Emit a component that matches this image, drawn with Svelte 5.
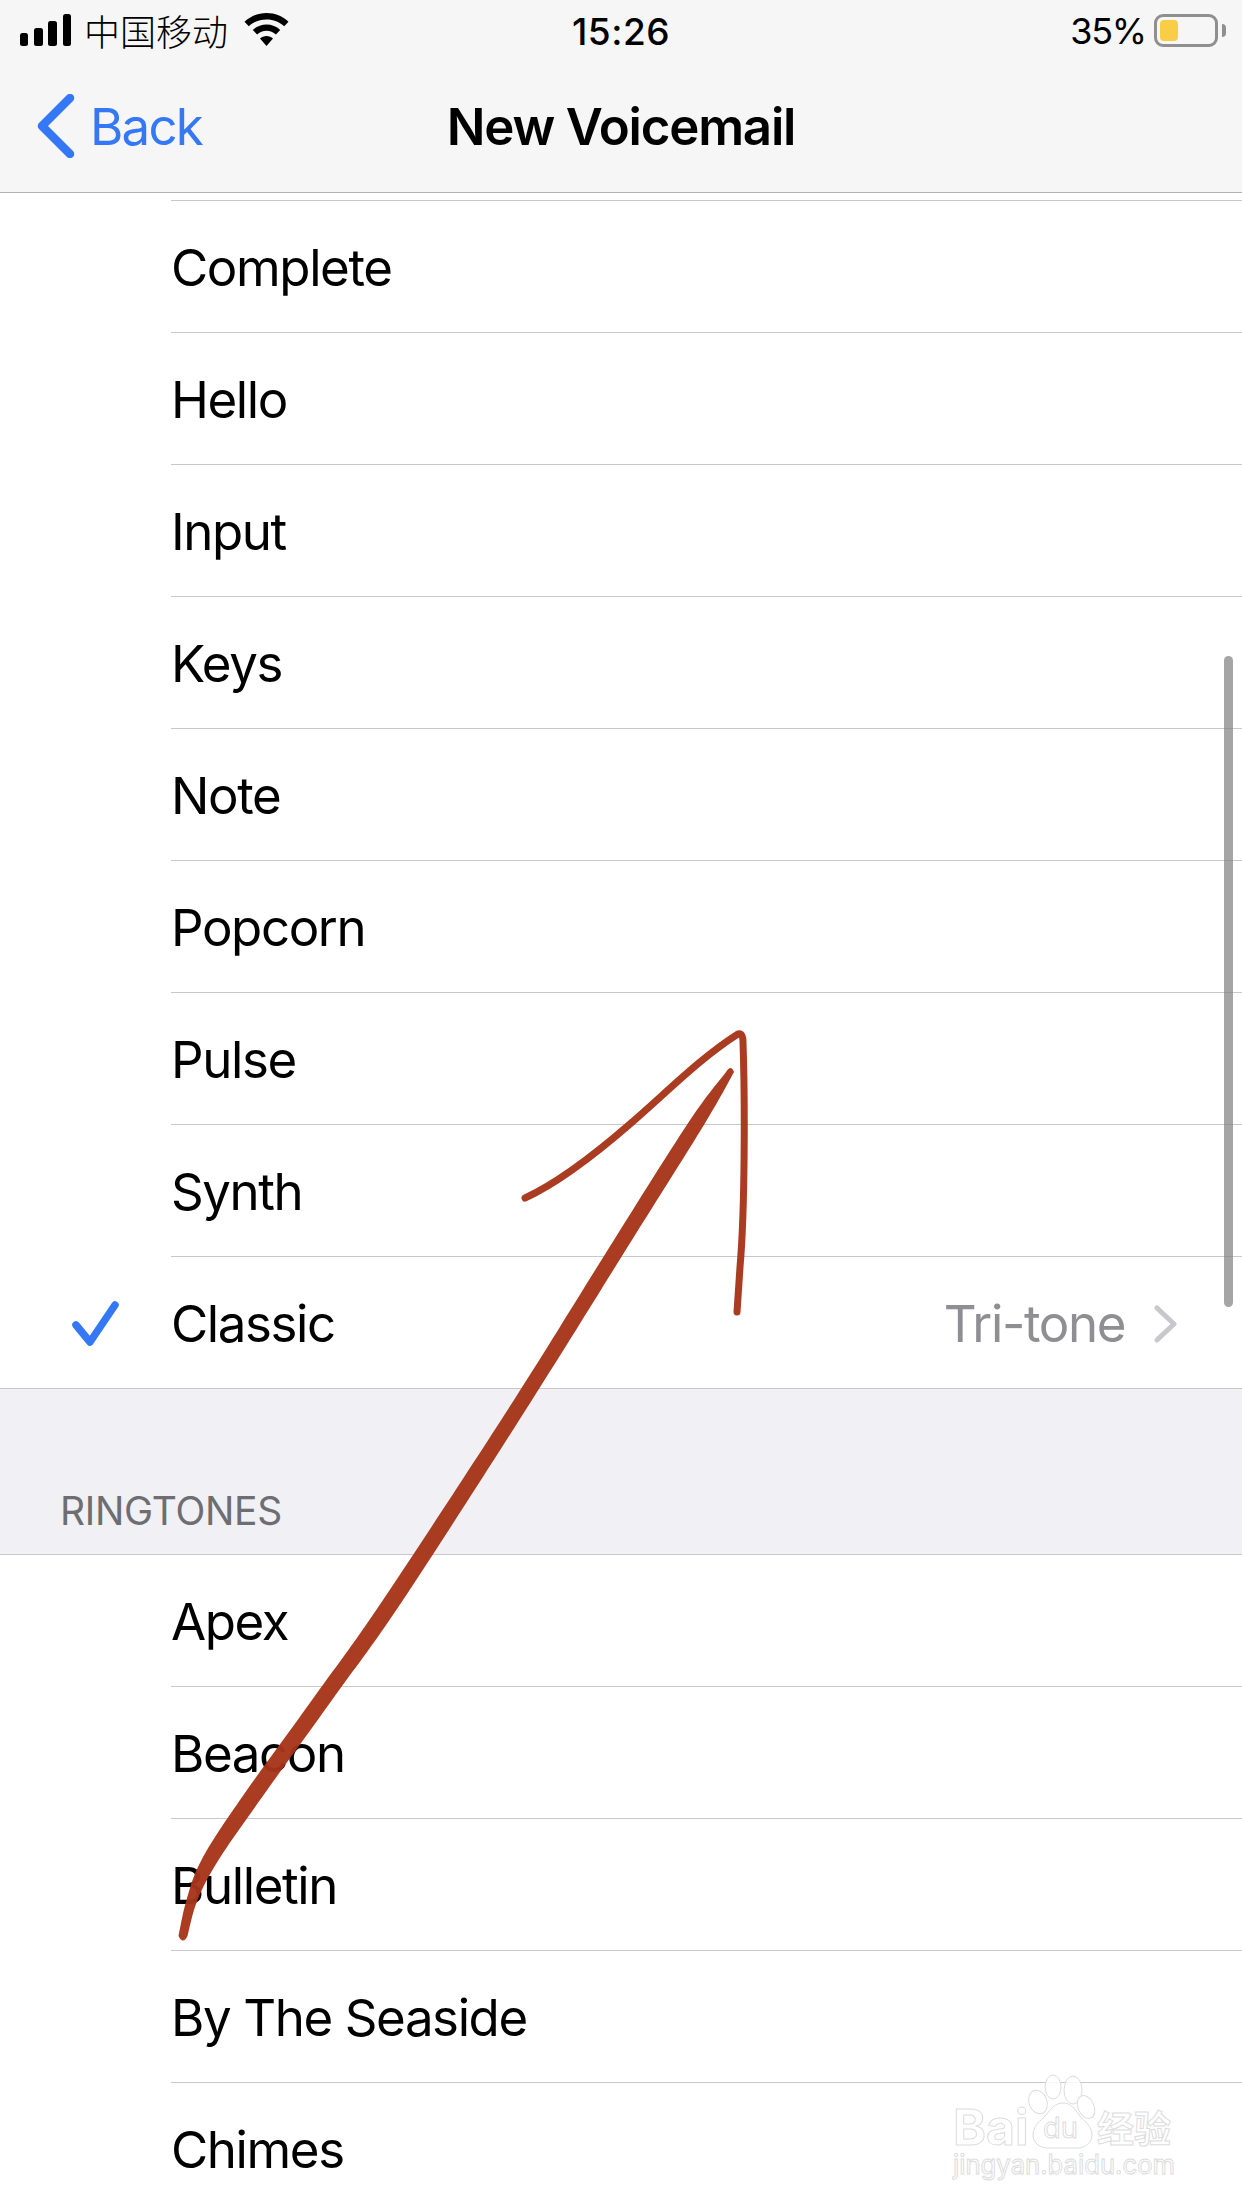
<script>
	const alerts = ['Complete', 'Hello', 'Input', 'Keys', 'Note', 'Popcorn', 'Pulse', 'Synth'];
	const ringtones = ['Apex', 'Beacon', 'Bulletin', 'By The Seaside', 'Chimes'];

	// centre line of the thick pen stroke: x, y, half width
	const pen = [[730, 1072, 4], [696, 1124, 8.5], [613, 1256, 9], [523, 1400, 9], [393, 1600, 10], [322, 1700, 10], [250, 1800, 10], [210, 1860, 8.5], [192, 1900, 5.5], [183, 1936, 4.5]];

	// catmull-rom through the points, so the outline has no kinks
	function smooth(pts) {
		let d = `L${pts[0][0]} ${pts[0][1]}`;
		for (let i = 0; i < pts.length - 1; i++) {
			const a = pts[i - 1] || pts[i];
			const b = pts[i];
			const c = pts[i + 1];
			const e = pts[i + 2] || c;
			const c1 = [b[0] + (c[0] - a[0]) / 6, b[1] + (c[1] - a[1]) / 6];
			const c2 = [c[0] - (e[0] - b[0]) / 6, c[1] - (e[1] - b[1]) / 6];
			d += `C${c1[0]} ${c1[1]} ${c2[0]} ${c2[1]} ${c[0]} ${c[1]}`;
		}
		return d;
	}
	const leftEdge = pen.map(([x, y, w]) => [x - w, y]).reverse();
	const rightEdge = pen.map(([x, y, w]) => [x + w, y]);
	const thick =
		smooth(leftEdge).replace('L', 'M') +
		'Q731 1064 734 1072' +
		smooth(rightEdge) +
		'Q183 1945 178.500 1936Z';
</script>

<div class="page">
	<header class="bar">
		<div class="status">
			<div class="status-left">
				<svg class="signal" width="51" height="32" viewBox="0 0 51 32">
					<rect x="0" y="19" width="8" height="13" rx="2.5" />
					<rect x="14" y="14" width="9" height="18" rx="2.5" />
					<rect x="28" y="7" width="9" height="25" rx="2.5" />
					<rect x="43" y="0" width="8" height="32" rx="2.5" />
				</svg>
				<span class="carrier">中国移动</span>
				<svg class="wifi" width="45" height="33" viewBox="0 0 45 33">
					<path d="M22.5 0C14 0 6.300 3.300.5 8.700l4.300 4.600C9.400 9 15.600 6.400 22.500 6.400S35.600 9 40.200 13.300l4.300-4.600C38.700 3.300 31 0 22.500 0z" />
					<path d="M22.500 11.500c-5.300 0-10.100 2-13.700 5.400l4.300 4.600c2.500-2.300 5.800-3.700 9.400-3.700s6.900 1.400 9.400 3.700l4.300-4.600c-3.600-3.400-8.400-5.400-13.700-5.400z" />
					<path d="M22.500 23c-2.500 0-4.800 1-6.500 2.500L22.500 33l6.500-7.500c-1.700-1.500-4-2.500-6.500-2.500z" />
				</svg>
			</div>
			<span class="time">15:26</span>
			<div class="status-right">
				<span class="percent">35%</span>
				<div class="battery"><div class="charge"></div></div>
				<div class="nub"></div>
			</div>
		</div>
		<nav class="nav">
			<div class="back">
				<svg width="38" height="64" viewBox="0 0 38 64">
					<path d="M33 4 5 32l28 28" fill="none" stroke="#3478f6" stroke-width="8.500" stroke-linecap="round" stroke-linejoin="round" />
				</svg>
				<span>Back</span>
			</div>
			<h1>New Voicemail</h1>
		</nav>
	</header>

	<main class="list">
		<div class="top-rule"></div>
		{#each alerts as name}
			<div class="row">
				<div class="cell">{name}</div>
			</div>
		{/each}
		<div class="row last">
			<div class="mark">
				<svg width="50" height="48" viewBox="0 0 50 48">
					<path d="M5 25 19 42 44 5" fill="none" stroke="#3478f6" stroke-width="7.500" stroke-linecap="round" stroke-linejoin="round" />
				</svg>
			</div>
			<div class="cell">
				<span>Classic</span>
				<span class="detail">Tri-tone</span>
				<svg class="chevron" width="24" height="38" viewBox="0 0 24 38">
					<path d="M3 3 20 19 3 35" fill="none" stroke="#c7c7cc" stroke-width="5" stroke-linecap="round" stroke-linejoin="round" />
				</svg>
			</div>
		</div>
		<div class="section"><span>RINGTONES</span></div>
		{#each ringtones as name}
			<div class="row">
				<div class="cell">{name}</div>
			</div>
		{/each}
	</main>

	<div class="scrollbar"></div>

	<!-- hand drawn arrow on top of the screenshot -->
	<svg class="ink" width="1242" height="2208" viewBox="0 0 1242 2208">
		<path d={thick} fill="#a63519" />
		<path
			d="M525 1198C560 1182 600 1150 630 1124C665 1094 700 1058 738 1034C742 1033 743 1037 743 1042C745 1100 745 1210 740 1267L737 1312"
			fill="none"
			stroke="#a63519"
			stroke-width="7"
			stroke-linecap="round"
			stroke-linejoin="round"
		/>
	</svg>

	<!-- watermark -->
	<svg class="mark-logo" width="302" height="128" viewBox="940 2070 302 128">
		<g fill="#fff" fill-opacity="0.85" stroke="#dcdcdc" stroke-width="1">
			<ellipse cx="1053" cy="2087" rx="8" ry="12" />
			<ellipse cx="1073" cy="2090" rx="9" ry="14" />
			<ellipse cx="1038" cy="2102" rx="9" ry="12" transform="rotate(-20 1038 2102)" />
			<ellipse cx="1086" cy="2107" rx="8" ry="12" transform="rotate(-25 1086 2107)" />
			<path d="M1063 2103c-8 0-12 6-17 12-6 6-13 11-13 20 0 9 8 13 16 13h28c8 0 15-5 15-13 0-9-7-13-13-20-4-6-8-12-16-12z" />
			<text x="953" y="2145" font-size="50" font-weight="700" class="wm">Bai</text>
			<text x="1043" y="2138" font-size="29" class="wm">du</text>
			<text x="1097" y="2143" font-size="37" font-weight="700" class="wm cjk">经验</text>
			<text x="953" y="2174" font-size="27" textLength="222" lengthAdjust="spacingAndGlyphs" class="wm">jingyan.baidu.com</text>
		</g>
	</svg>
</div>

<style>
	:global(body) {
		margin: 0;
		background: #fff;
	}
	.page {
		position: relative;
		width: 1242px;
		height: 2208px;
		overflow: hidden;
		background: #fff;
		color: #000;
		font-family: Inter, "Noto Sans CJK SC", sans-serif;
	}
	.bar {
		height: 193px;
		box-sizing: border-box;
		background: #f6f6f6;
		border-bottom: 1px solid #b2b2b2;
	}
	.status {
		position: relative;
		display: flex;
		justify-content: space-between;
		align-items: center;
		height: 60px;
		padding: 0 16px 0 20px;
	}
	.status-left {
		display: flex;
		align-items: center;
	}
	.signal {
		fill: #000;
	}
	.carrier {
		margin-left: 13px;
		font-size: 36px;
		font-family: "Noto Sans CJK SC", sans-serif;
		font-weight: 300;
	}
	.wifi {
		margin-left: 16px;
		margin-bottom: 2px;
	}
	.time {
		position: absolute;
		left: 572px;
		top: 9px;
		font-size: 37px;
		font-weight: 500;
		letter-spacing: 0.500px;
	}
	.status-right {
		display: flex;
		align-items: center;
	}
	.percent {
		padding-top: 2px;
		font-size: 36px;
		font-weight: 400;
		letter-spacing: -1.200px;
		margin-right: 8px;
	}
	.battery {
		box-sizing: border-box;
		width: 64px;
		height: 33px;
		padding: 3px;
		border: 3px solid #8f8f8f;
		border-radius: 9px;
	}
	.charge {
		width: 18px;
		height: 100%;
		background: #f9ce46;
		border-radius: 4px;
	}
	.nub {
		width: 4px;
		height: 13px;
		margin-left: 4px;
		background: #8f8f8f;
		border-radius: 0 4px 4px 0;
	}
	.nav {
		position: relative;
		display: flex;
		align-items: center;
		justify-content: center;
		height: 132px;
	}
	.back {
		position: absolute;
		left: 37px;
		display: flex;
		align-items: center;
		gap: 15px;
		color: #3478f6;
		font-size: 51px;
		letter-spacing: -1.800px;
	}
	h1 {
		margin: 0;
		font-size: 51px;
		font-weight: 600;
		letter-spacing: -1.200px;
	}
	.list {
		padding-top: 7px;
	}
	.top-rule {
		height: 1px;
		margin-left: 171px;
		background: #c8c7cc;
	}
	.row {
		position: relative;
		height: 132px;
		padding-left: 171px;
		box-sizing: border-box;
		font-size: 51px;
		letter-spacing: -1.400px;
	}
	.cell {
		display: flex;
		align-items: center;
		height: 100%;
		box-sizing: border-box;
		padding-top: 2px;
		border-bottom: 1px solid #c8c7cc;
	}
	.last {
		height: 131px;
	}
	.last .cell {
		border-bottom: 0;
	}
	.mark {
		position: absolute;
		left: 71px;
		top: 42px;
	}
	.detail {
		margin-left: auto;
		color: #8e8e93;
	}
	.chevron {
		margin-left: 29px;
		margin-right: 64px;
	}
	.section {
		display: flex;
		align-items: flex-end;
		height: 167px;
		box-sizing: border-box;
		padding: 0 0 20px 60px;
		background: #f0f0f5;
		border-top: 1px solid #c8c7cc;
		border-bottom: 1px solid #c8c7cc;
		color: #6d6d72;
		font-size: 39px;
		letter-spacing: -0.300px;
		line-height: 46px;
	}
	.scrollbar {
		position: absolute;
		top: 656px;
		left: 1224px;
		width: 9px;
		height: 651px;
		background: rgba(130, 130, 130, 0.72);
		border-radius: 5px;
	}
	.ink {
		position: absolute;
		top: 0;
		left: 0;
		opacity: 0.96;
	}
	.mark-logo {
		position: absolute;
		top: 2070px;
		left: 940px;
	}
	.wm {
		font-family: Inter, sans-serif;
	}
	.cjk {
		font-family: "Noto Sans CJK SC", sans-serif;
	}
</style>
